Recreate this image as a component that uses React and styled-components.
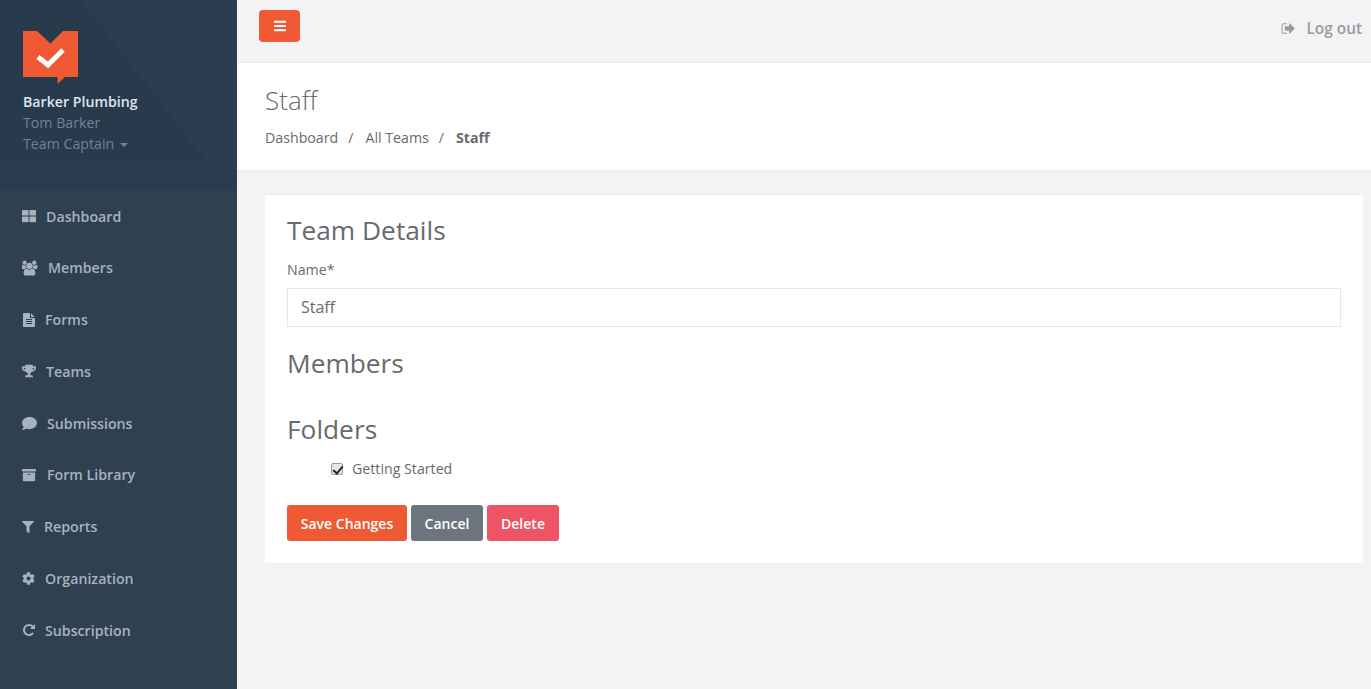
import React from "react";
import styled, { createGlobalStyle } from "styled-components";
import {
  FaArchive,
  FaBars,
  FaCog,
  FaComment,
  FaFilter,
  FaThLarge,
  FaTrophy,
} from "react-icons/fa";

const GlobalStyle = createGlobalStyle`
  html, body {
    margin: 0;
    padding: 0;
    height: 100%;
    background: #f3f3f5;
  }
  body {
    font-family: "Open Sans", "Liberation Sans", sans-serif;
    font-size: 14.2px;
    color: #676a6c;
  }
  * {
    box-sizing: border-box;
  }
`;

const Layout = styled.div`
  display: flex;
  width: 1371px;
  height: 689px;
  overflow: hidden;
`;

const Sidebar = styled.aside`
  width: 237px;
  flex-shrink: 0;
  background: #2f4050;
  display: flex;
  flex-direction: column;
`;

const Profile = styled.div`
  height: 190px;
  padding: 31px 0 0 23px;
  background:
    linear-gradient(to bottom, transparent 0 165px, #2a3d4f 165px 100%),
    linear-gradient(52deg, #283b4c 0 59.4%, #2a3e50 59.4% 100%);
`;

const Logo = styled.svg`
  display: block;
  width: 55px;
  height: 53px;
  margin-bottom: 7px;
`;

const Company = styled.div`
  font-weight: 600;
  line-height: 21px;
  color: #dfe4ed;
`;

const ProfileLine = styled.div`
  line-height: 21px;
  color: #6f8299;
  display: flex;
  align-items: center;
  gap: 6px;
`;

const Caret = styled.span`
  width: 0;
  height: 0;
  margin-top: 2px;
  border-top: 4px solid #6f8299;
  border-left: 4.5px solid transparent;
  border-right: 4.5px solid transparent;
`;

const Nav = styled.nav`
  display: flex;
  flex-direction: column;
  padding-top: 0.2px;
`;

const NavItem = styled.a`
  height: 51.75px;
  padding-left: 22px;
  display: flex;
  align-items: center;
  gap: ${(p) => p.$gap}px;
  font-weight: 600;
  color: #a7b1c2;
  svg {
    flex-shrink: 0;
    width: ${(p) => p.$icon}px;
    height: ${(p) => p.$icon}px;
  }
`;

const Main = styled.main`
  flex: 1;
  min-width: 0;
  display: flex;
  flex-direction: column;
`;

const TopBar = styled.header`
  height: 63px;
  flex-shrink: 0;
  display: flex;
  justify-content: space-between;
  padding: 10px 9px 0 22px;
  border-bottom: 1px solid #e7eaec;
`;

const MenuButton = styled.button`
  width: 41px;
  height: 32px;
  border: none;
  border-radius: 4px;
  background: #ef5a34;
  color: #fff;
  display: flex;
  align-items: center;
  justify-content: center;
  padding: 0;
  svg {
    width: 12px;
    height: 14px;
  }
`;

const LogOut = styled.a`
  display: flex;
  align-items: center;
  gap: 10px;
  height: 37px;
  font-size: 15.4px;
  font-weight: 600;
  color: #999c9e;
`;

const Heading = styled.section`
  height: 108px;
  flex-shrink: 0;
  padding: 21px 28px 0;
  background: #fff;
  border-bottom: 1px solid #e7eaec;
`;

const PageTitle = styled.h2`
  margin: 0;
  font-size: 26px;
  font-weight: 300;
  line-height: 32px;
  color: #676a6c;
`;

const Breadcrumb = styled.ol`
  list-style: none;
  margin: 12px 0 0;
  padding: 0;
  display: flex;
  line-height: 20px;
`;

const Crumb = styled.li`
  font-weight: ${(p) => (p.$active ? 700 : 400)};
  &:not(:last-child)::after {
    content: "/";
    display: inline-block;
    padding: 0 12px 0 10px;
  }
`;

const Content = styled.div`
  padding: 23px 8px 0 28px;
`;

const Card = styled.form`
  height: 369px;
  padding: 19px 22px;
  background: #fff;
  border-top: 1px solid #e7eaec;
`;

const SectionTitle = styled.h3`
  margin: ${(p) => p.$top}px 0 0;
  font-size: 26.3px;
  font-weight: 400;
  line-height: 32px;
  color: #676a6c;
`;

const Label = styled.label`
  display: block;
  margin-top: 14px;
  line-height: 20px;
`;

const TextInput = styled.input`
  display: block;
  width: 100%;
  height: 39px;
  margin-top: 8px;
  padding: 0 13px 2px;
  border: 1px solid #e5e6e7;
  font-family: inherit;
  font-size: 16px;
  color: #676a6c;
  outline: none;
`;

const CheckRow = styled.label`
  display: flex;
  align-items: center;
  gap: 9px;
  margin: 14px 0 0 44px;
  line-height: 20px;
`;

const Check = styled.input`
  appearance: none;
  position: relative;
  width: 12px;
  height: 12px;
  margin: 0;
  border: 1px solid #9a9a9a;
  border-radius: 2px;
  background: #e6e6e6;
  &:checked::after {
    content: "";
    position: absolute;
    left: 3px;
    top: 0;
    width: 4px;
    height: 8px;
    border: solid #2b2b2b;
    border-width: 0 2px 2px 0;
    transform: rotate(40deg);
  }
`;

const Actions = styled.div`
  display: flex;
  gap: 4px;
  margin-top: 26px;
`;

const Button = styled.button`
  width: ${(p) => p.$width}px;
  height: 36px;
  padding: 0;
  border: none;
  border-radius: 3px;
  background: ${(p) => p.$bg};
  color: #fff;
  font-family: inherit;
  font-size: 14px;
  font-weight: 600;
`;

// font awesome 4 shapes, the package only ships the redrawn v5 ones
const Fa4 = ({ d, width = 1792 }) => (
  <svg viewBox={`0 0 ${width} 1792`} fill="currentColor">
    <path d={d} />
  </svg>
);

const UsersIcon = () => (
  <Fa4
    width={1920}
    d="M529 896q-162 5-265 128h-134q-82 0-138-40.5t-56-118.5q0-353 124-353 6 0 43.5 21t97.5 42.5 119 21.5q67 0 133-23-5 37-5 66 0 139 81 256zm1071 637q0 120-73 189.5t-194 69.5h-874q-121 0-194-69.5t-73-189.5q0-53 3.5-103.5t14-109 26.5-108.5 43-97.5 62-81 85.5-53.5 111.5-20q10 0 43 21.5t73 48 107 48 135 21.5 135-21.5 107-48 73-48 43-21.5q61 0 111.5 20t85.5 53.5 62 81 43 97.5 26.5 108.5 14 109 3.5 103.5zm-1024-1277q0 106-75 181t-181 75-181-75-75-181 75-181 181-75 181 75 75 181zm704 384q0 159-112.5 271.5t-271.5 112.5-271.5-112.5-112.5-271.5 112.5-271.5 271.5-112.5 271.5 112.5 112.5 271.5zm576 225q0 78-56 118.5t-138 40.5h-134q-103-123-265-128 81-117 81-256 0-29-5-66 66 23 133 23 59 0 119-21.5t97.5-42.5 43.5-21q124 0 124 353zm-128-609q0 106-75 181t-181 75-181-75-75-181 75-181 181-75 181 75 75 181z"
  />
);

const FileTextIcon = () => (
  <Fa4 d="M1596 476q14 14 28 36h-472v-472q22 14 36 28zm-476 164h544v1056q0 40-28 68t-68 28h-1344q-40 0-68-28t-28-68v-1600q0-40 28-68t68-28h800v544q0 40 28 68t68 28zm160 736v-64q0-14-9-23t-23-9h-704q-14 0-23 9t-9 23v64q0 14 9 23t23 9h704q14 0 23-9t9-23zm0-256v-64q0-14-9-23t-23-9h-704q-14 0-23 9t-9 23v64q0 14 9 23t23 9h704q14 0 23-9t9-23zm0-256v-64q0-14-9-23t-23-9h-704q-14 0-23 9t-9 23v64q0 14 9 23t23 9h704q14 0 23-9t9-23z" />
);

const RepeatIcon = () => (
  <Fa4 d="M1664 256v448q0 26-19 45t-45 19h-448q-42 0-59-40-17-39 14-69l138-138q-148-137-349-137-104 0-198.5 40.5t-163.5 109.5-109.5 163.5-40.5 198.5 40.5 198.5 109.5 163.5 163.5 109.5 198.5 40.5q119 0 225-52t179-147q7-10 23-12 15 0 25 9l137 137q9 8 9.5 20.5t-7.5 22.5q-109 132-264 204.5t-327 72.5q-156 0-298-61t-245-164-164-245-61-298 61-298 164-245 245-164 298-61q147 0 284.5 55.5t244.5 156.5l130-129q29-31 70-14 39 17 39 59z" />
);

const SignOutIcon = styled(({ className }) => (
  <span className={className}>
    <Fa4 d="M704 1440q0 4 1 20t.5 26.5-3 23.5-10 19.5-20.5 6.5h-320q-119 0-203.5-84.5t-84.5-203.5v-704q0-119 84.5-203.5t203.5-84.5h320q13 0 22.5 9.5t9.5 22.5q0 4 1 20t.5 26.5-3 23.5-10 19.5-20.5 6.5h-320q-66 0-113 47t-47 113v704q0 66 47 113t113 47h312l11.5 1 11.5 3 8 5.5 7 9 2 13.5zm928-544q0 26-19 45l-544 544q-19 19-45 19t-45-19-19-45v-288h-448q-26 0-45-19t-19-45v-384q0-26 19-45t45-19h448v-288q0-26 19-45t45-19 45 19l544 544q19 19 19 45z" />
  </span>
))`
  display: flex;
  svg {
    width: 15px;
    height: 15px;
  }
`;

const navItems = [
  { label: "Dashboard", Icon: FaThLarge, icon: 14, gap: 10 },
  { label: "Members", Icon: UsersIcon, icon: 16, gap: 10 },
  { label: "Forms", Icon: FileTextIcon, icon: 14, gap: 9 },
  { label: "Teams", Icon: FaTrophy, icon: 14, gap: 10 },
  { label: "Submissions", Icon: FaComment, icon: 15, gap: 10 },
  { label: "Form Library", Icon: FaArchive, icon: 14, gap: 11 },
  { label: "Reports", Icon: FaFilter, icon: 12, gap: 10 },
  { label: "Organization", Icon: FaCog, icon: 13, gap: 10 },
  { label: "Subscription", Icon: RepeatIcon, icon: 14, gap: 9 },
];

const App = () => {
  return (
    <Layout>
      <GlobalStyle />
      <Sidebar>
        <Profile>
          <Logo viewBox="0 0 55 53">
            <path d="M0 0H14L27.5 12.5 40 0H55V46H42L34.5 53V46H0Z" fill="#ef5a34" />
            <path d="M15 26L25 34 40 19" fill="none" stroke="#fff" strokeWidth="5" />
          </Logo>
          <Company>Barker Plumbing</Company>
          <ProfileLine>Tom Barker</ProfileLine>
          <ProfileLine>
            Team Captain <Caret />
          </ProfileLine>
        </Profile>
        <Nav>
          {navItems.map(({ label, Icon, icon, gap }) => (
            <NavItem key={label} $icon={icon} $gap={gap}>
              <Icon />
              {label}
            </NavItem>
          ))}
        </Nav>
      </Sidebar>
      <Main>
        <TopBar>
          <MenuButton type="button">
            <FaBars />
          </MenuButton>
          <LogOut>
            <SignOutIcon />
            Log out
          </LogOut>
        </TopBar>
        <Heading>
          <PageTitle>Staff</PageTitle>
          <Breadcrumb>
            <Crumb>Dashboard</Crumb>
            <Crumb>All Teams</Crumb>
            <Crumb $active>Staff</Crumb>
          </Breadcrumb>
        </Heading>
        <Content>
          <Card>
            <SectionTitle $top={0}>Team Details</SectionTitle>
            <Label>Name*</Label>
            <TextInput defaultValue="Staff" />
            <SectionTitle $top={20}>Members</SectionTitle>
            <SectionTitle $top={34}>Folders</SectionTitle>
            <CheckRow>
              <Check type="checkbox" defaultChecked />
              Getting Started
            </CheckRow>
            <Actions>
              <Button type="button" $bg="#ef5a34" $width={120}>Save Changes</Button>
              <Button type="button" $bg="#6c757d" $width={72}>Cancel</Button>
              <Button type="button" $bg="#ed5565" $width={72}>Delete</Button>
            </Actions>
          </Card>
        </Content>
      </Main>
    </Layout>
  );
};

export default App;
